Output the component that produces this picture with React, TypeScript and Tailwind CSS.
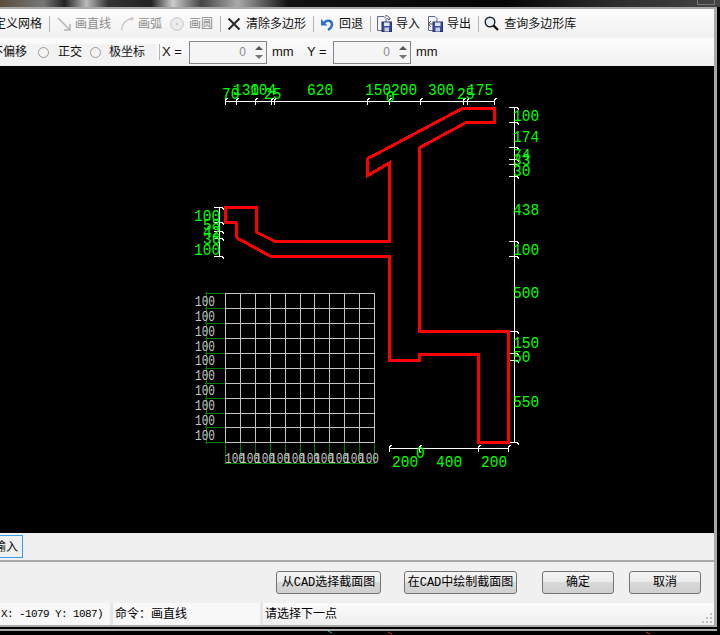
import type { ReactNode } from 'react';

const POLY =
  '225,207 256,207 256,232 274,241 389,241 389,163 367,176 367,159 463,108 494,108 494,122 467,122 419,148 419,331 508,331 508,442 478,442 478,354 419,354 419,360 389,360 389,256 270,256 237,238 236,222 225,222';

const TOP_TICKS = [225, 236, 255, 271, 274, 367, 389, 420, 463, 467, 494];
const RIGHT_TICKS = [107, 122, 147, 159, 164, 176, 241, 256, 331, 353, 360, 442];
const LEFT_TICKS = [207, 222, 231, 238, 256];
const BOTTOM_TICKS = [389, 419, 478, 508];

const COLS = [225, 240, 255, 270, 285, 300, 314, 329, 344, 359, 374];
const ROWS = [293, 308, 323, 338, 353, 368, 383, 398, 413, 427, 442];
const ROW_LABELS = [306, 321, 336, 351, 365, 380, 395, 410, 425, 440];

// x, baseline, text
const LABELS: [number, number, string][] = [
  [222, 99, '70'], [233, 95, '130'], [250, 95, '104'], [264, 99, '25'], [307, 95, '620'],
  [365, 95, '150'], [386, 102, '0'], [391, 95, '200'], [428, 95, '300'], [457, 99, '25'], [467, 95, '175'],
  [513, 121, '100'], [513, 142, '174'], [513, 160, '74'], [513, 165, '33'], [513, 176, '30'],
  [513, 215, '438'], [513, 255, '100'], [513, 298, '500'], [513, 348, '150'], [513, 362, '50'], [513, 407, '550'],
  [392, 467, '200'], [416, 458, '0'], [436, 467, '400'], [481, 467, '200'],
  [194, 221, '100'], [203, 230, '58'], [203, 237, '42'], [203, 244, '36'], [194, 255, '100'],
];

function Sep({ className }: { className: string }) {
  return <div className={`h-[16px] w-[1px] shrink-0 bg-[#b4b4b4] ${className}`} />;
}

function Tool({ icon, label, className, gap, muted }: { icon: ReactNode; label: string; className: string; gap: string; muted?: boolean }) {
  return (
    <div className={`flex shrink-0 items-center ${gap} ${className}`}>
      {icon}
      <span className={muted ? 'text-[#8c8c8c]' : 'text-[#111]'}>{label}</span>
    </div>
  );
}

function FloppyIcon({ out }: { out?: boolean }) {
  return (
    <svg width="16" height="17" viewBox="0 0 16 17" className="shrink-0">
      <path d="M1.5 1.5H8L10 3.5V15.5H1.5Z" fill="#f4f6fb" stroke="#5a6a90" />
      <rect x="6" y="7" width="9.5" height="9.5" fill="#3d4f9a" stroke="#26326e" />
      <rect x="8" y="7.5" width="5.5" height="3.5" fill="#dfe6f5" />
      <rect x="8.5" y="12.5" width="4.5" height="4" fill="#c9cfdf" />
      <path d={out ? 'M4 6 L1 9 L4 12 M1.500 9H6' : 'M9 1 C12 0 14 2 13 5 M13 5 L11 3.500 M13 5 L14.500 3'} fill="none" stroke="#555" strokeWidth="1" />
    </svg>
  );
}

function Radio({ className }: { className: string }) {
  return <div className={`h-[11px] w-[11px] shrink-0 rounded-full border border-[#9a9a9a] bg-[#f4f4f4] ${className}`} />;
}

function NumberBox({ className }: { className: string }) {
  return (
    <div className={`flex h-[23px] w-[78px] shrink-0 items-center justify-end border border-[#868686] bg-[#f5f5f5] pr-[3px] ${className}`}>
      <span className="mr-[8px] text-[#8a8a8a]">0</span>
      <div className="flex h-full w-[9px] flex-col items-center justify-center gap-[5px]">
        <div className="h-0 w-0 border-x-[4px] border-b-[4px] border-x-transparent border-b-[#555]" />
        <div className="h-0 w-0 border-x-[4px] border-t-[4px] border-x-transparent border-t-[#777]" />
      </div>
    </div>
  );
}

function DimText({ x, y, text }: { x: number; y: number; text: string }) {
  return (
    <text x={x} y={y} fill="#00ff00" fontSize="16" fontFamily="'Liberation Mono', monospace" textLength={text.length * 8.7} lengthAdjust="spacingAndGlyphs">
      {text}
    </text>
  );
}

function GridText({ x, y, size }: { x: number; y: number; size: number }) {
  return (
    <text x={x} y={y} fill="#c8c8c8" fontSize={size} fontFamily="'Liberation Mono', monospace" textLength={20} lengthAdjust="spacingAndGlyphs">
      100
    </text>
  );
}

function Drawing() {
  return (
    <svg viewBox="0 66 714 467" className="block h-[467px] w-[714px] shrink-0 bg-black" shapeRendering="crispEdges">
      {/* grid */}
      {ROWS.map((y) => (
        <line key={y} x1="205" x2="225" y1={y + 0.5} y2={y + 0.5} stroke="#007a00" />
      ))}
      {COLS.map((x) => (
        <line key={x} x1={x + 0.5} x2={x + 0.5} y1="442" y2="464" stroke="#007a00" />
      ))}
      <line x1="206.500" x2="206.500" y1="292" y2="444" stroke="#007a00" />
      <line x1="225" x2="375" y1="463.500" y2="463.500" stroke="#007a00" />
      {ROWS.map((y) => (
        <line key={y} x1="225" x2="375" y1={y + 0.5} y2={y + 0.5} stroke="#c4c4c4" />
      ))}
      {COLS.map((x) => (
        <line key={x} x1={x + 0.5} x2={x + 0.5} y1="293" y2="443" stroke="#c4c4c4" />
      ))}
      <g opacity="0.99">
        {ROW_LABELS.map((y) => (
          <GridText key={y} x={195} y={y} size={15} />
        ))}
        {COLS.slice(0, 10).map((x) => (
          <GridText key={x} x={x} y={463} size={14} />
        ))}
      </g>

      {/* dimension lines */}
      <g stroke="#fff" fill="none">
        <line x1="225" x2="494" y1="101.500" y2="101.500" />
        <line x1="389" x2="509" y1="448.500" y2="448.500" />
        <line x1="514.500" x2="514.500" y1="107" y2="443" />
        <line x1="219.500" x2="219.500" y1="207" y2="257" />
        {TOP_TICKS.map((x) => (
          <path key={x} d={`M${x + 0.5} 105V100L${x + 2.5} 98`} />
        ))}
        {BOTTOM_TICKS.map((x) => (
          <path key={x} d={`M${x + 0.5} 452V447L${x + 2.5} 445`} />
        ))}
        {RIGHT_TICKS.map((y) => (
          <path key={y} d={`M509 ${y + 0.5}H517L519 ${y + 2.5}`} />
        ))}
        {LEFT_TICKS.map((y) => (
          <path key={y} d={`M214 ${y + 0.5}H222L224 ${y + 2.5}`} />
        ))}
      </g>

      <polygon points={POLY} fill="none" stroke="#ff0000" strokeWidth="3" />

      {LABELS.map(([x, y, t]) => (
        <DimText key={`${x}-${y}`} x={x} y={y} text={t} />
      ))}
    </svg>
  );
}

function CadButton({ label, className }: { label: string; className: string }) {
  return (
    <button className={`flex h-[23px] shrink-0 items-center justify-center rounded-[3px] border border-[#737373] bg-[linear-gradient(#f3f3f3_0%,#ececec_45%,#d9d9d9_50%,#cfcfcf_100%)] text-[12px] text-black ${className}`}>
      {label}
    </button>
  );
}

export default function App() {
  return (
    <div className="relative flex h-[635px] w-[720px] flex-col overflow-hidden bg-black font-['Liberation_Mono','Noto_Sans_CJK_SC',sans-serif] text-[12px]">
      {/* glass title strip */}
      <div className="relative h-[7px] w-full shrink-0 bg-[linear-gradient(90deg,#5a4a3c_0%,#777_6%,#222_9%,#bbb_12%,#333_15%,#222_21%,#ccc_24%,#444_28%,#aaa_33%,#111_40%,#050505_70%,#2c2c2c_85%,#444_100%)]">
        <div className="absolute top-[-1px] right-[5px] h-[6px] w-[18px] border border-[#777]" />
      </div>

      <div className="flex h-[620px] w-[717px] shrink-0 flex-col overflow-hidden border-y-2 border-r-[3px] border-[#a9a9a9]">
        {/* toolbar 1 */}
        <div className="flex h-[29px] shrink-0 items-center bg-[linear-gradient(#fdfdfd,#f0f0f0)] font-['Liberation_Sans','Noto_Sans_CJK_SC',sans-serif]">
          <span className="ml-[-6px] shrink-0 text-[#111]">定义网格</span>
          <Sep className="ml-[7px]" />
          <Tool
            className="ml-[7px]"
            gap="gap-[4px]"
            muted
            label="画直线"
            icon={
              <svg width="14" height="14" viewBox="0 0 14 14" className="shrink-0">
                <path d="M1 1L13 13M13 7V13H7" fill="none" stroke="#b5b5b5" strokeWidth="1.500" />
              </svg>
            }
          />
          <Tool
            className="ml-[9px]"
            gap="gap-[4px]"
            muted
            label="画弧"
            icon={
              <svg width="14" height="14" viewBox="0 0 14 14" className="shrink-0">
                <path d="M1.500 13C2 7 6 2.500 12 1.500" fill="none" stroke="#c4c4c4" strokeWidth="1.500" />
                <circle cx="12" cy="1.800" r="1.300" fill="#eee" stroke="#bbb" />
              </svg>
            }
          />
          <Tool
            className="ml-[8px]"
            gap="gap-[5px]"
            muted
            label="画圆"
            icon={
              <svg width="14" height="14" viewBox="0 0 14 14" className="shrink-0">
                <circle cx="7" cy="7" r="6.300" fill="#ececec" stroke="#c4c4c4" />
                <circle cx="7" cy="7" r="1" fill="#bdbdbd" />
              </svg>
            }
          />
          <Sep className="ml-[7px]" />
          <Tool
            className="ml-[6px]"
            gap="gap-[5px]"
            label="清除多边形"
            icon={
              <svg width="14" height="14" viewBox="0 0 14 14" className="shrink-0">
                <path d="M1.500 1.500L12.500 12.500M12.500 1.500L1.500 12.500" fill="none" stroke="#2a2a2a" strokeWidth="2" />
              </svg>
            }
          />
          <Sep className="ml-[7px]" />
          <Tool
            className="ml-[6px]"
            gap="gap-[5px]"
            label="回退"
            icon={
              <svg width="14" height="14" viewBox="0 0 14 14" className="shrink-0">
                <path d="M4 6C6 2.500 12 3 12 7.500C12 10 10.500 11.500 8 13" fill="none" stroke="#2f6fc0" strokeWidth="2.400" />
                <path d="M1 2V8.500H7.500Z" fill="#2f6fc0" />
              </svg>
            }
          />
          <Sep className="ml-[7px]" />
          <Tool className="ml-[5px]" gap="gap-[4px]" label="导入" icon={<FloppyIcon />} />
          <Tool className="ml-[7px]" gap="gap-[4px]" label="导出" icon={<FloppyIcon out />} />
          <Sep className="ml-[7px]" />
          <Tool
            className="ml-[5px]"
            gap="gap-[5px]"
            label="查询多边形库"
            icon={
              <svg width="15" height="15" viewBox="0 0 15 15" className="shrink-0">
                <circle cx="6" cy="6" r="4.800" fill="#e2f0fb" stroke="#222" strokeWidth="1.400" />
                <path d="M9.500 9.500L14 14" stroke="#111" strokeWidth="2.400" />
              </svg>
            }
          />
        </div>

        {/* toolbar 2 */}
        <div className="flex h-[28px] shrink-0 items-center bg-[linear-gradient(#fdfdfd,#f0f0f0)] font-['Liberation_Sans','Noto_Sans_CJK_SC',sans-serif] text-[#111]">
          <div className="ml-[-9px] flex h-[17px] w-[165px] shrink-0 items-center bg-[#f2f2f2]">
            <span className="shrink-0">不偏移</span>
            <Radio className="ml-[11px]" />
            <span className="ml-[9px] shrink-0">正交</span>
            <Radio className="ml-[8px]" />
            <span className="ml-[8px] shrink-0">极坐标</span>
          </div>
          <Sep className="ml-[3px]" />
          <span className="ml-[2px] w-[27px] shrink-0 text-[13px]">X =</span>
          <NumberBox className="" />
          <span className="ml-[5px] w-[22px] shrink-0 text-[13px]">mm</span>
          <span className="ml-[13px] w-[26px] shrink-0 text-[13px]">Y =</span>
          <NumberBox className="" />
          <span className="ml-[5px] shrink-0 text-[13px]">mm</span>
        </div>

        <Drawing />

        {/* tab strip */}
        <div className="flex h-[29px] shrink-0 items-start border-b-2 border-[#a8a8a8] bg-[#f0f0f0] pt-[2px] font-['Liberation_Sans','Noto_Sans_CJK_SC',sans-serif]">
          <div className="ml-[-8px] flex h-[23px] w-[31px] shrink-0 items-center justify-end border border-[#3d9cf0] bg-[#f0f0f0] pr-[4px] text-[#111]">
            <span className="shrink-0 whitespace-nowrap">输入</span>
          </div>
        </div>

        {/* buttons */}
        <div className="flex h-[41px] shrink-0 items-center bg-[#f0f0f0] pl-[276px]">
          <CadButton label="从CAD选择截面图" className="w-[105px]" />
          <CadButton label="在CAD中绘制截面图" className="ml-[23px] w-[113px]" />
          <CadButton label="确定" className="ml-[25px] w-[72px]" />
          <CadButton label="取消" className="ml-[15px] w-[72px]" />
        </div>

        {/* status bar */}
        <div className="relative flex h-[22px] shrink-0 items-stretch gap-[3px] bg-[#e6e6e6] text-black">
          <div className="flex w-[110px] shrink-0 items-center justify-end overflow-hidden whitespace-nowrap bg-[#f8f8f8] pr-[7px] text-[11px] tracking-[-0.6px]">
            (X: -1079 Y: 1087)
          </div>
          <div className="flex w-[147px] shrink-0 items-center bg-[#f8f8f8] pl-[2px] font-['Liberation_Sans','Noto_Sans_CJK_SC',sans-serif]">
            命令：画直线
          </div>
          <div className="flex flex-1 items-center bg-[linear-gradient(#fbfbfb,#eeeeee)] pl-[2px] font-['Liberation_Sans','Noto_Sans_CJK_SC',sans-serif]">
            请选择下一点
          </div>
          {/* resize grip */}
          <div className="absolute right-[2px] bottom-[2px] grid grid-cols-3 gap-[2px]">
            <span className="h-[2px] w-[2px]" />
            <span className="h-[2px] w-[2px]" />
            <span className="h-[2px] w-[2px] bg-[#bdbdbd]" />
            <span className="h-[2px] w-[2px]" />
            <span className="h-[2px] w-[2px] bg-[#bdbdbd]" />
            <span className="h-[2px] w-[2px] bg-[#bdbdbd]" />
            <span className="h-[2px] w-[2px] bg-[#bdbdbd]" />
            <span className="h-[2px] w-[2px] bg-[#bdbdbd]" />
            <span className="h-[2px] w-[2px] bg-[#bdbdbd]" />
          </div>
        </div>
      </div>

      {/* bottom frame line and the bit of desktop showing below it */}
      <div className="mt-[2px] h-[2px] w-[717px] shrink-0 bg-[#a9a9a9]" />
      <svg width="720" height="4" viewBox="0 0 720 4" className="block shrink-0">
        <path d="M328 0L332 2" stroke="#2aa8d8" />
        <path d="M388 1L392 3" stroke="#e03030" />
        <path d="M646 1L650 3" stroke="#e03030" />
      </svg>
    </div>
  );
}
